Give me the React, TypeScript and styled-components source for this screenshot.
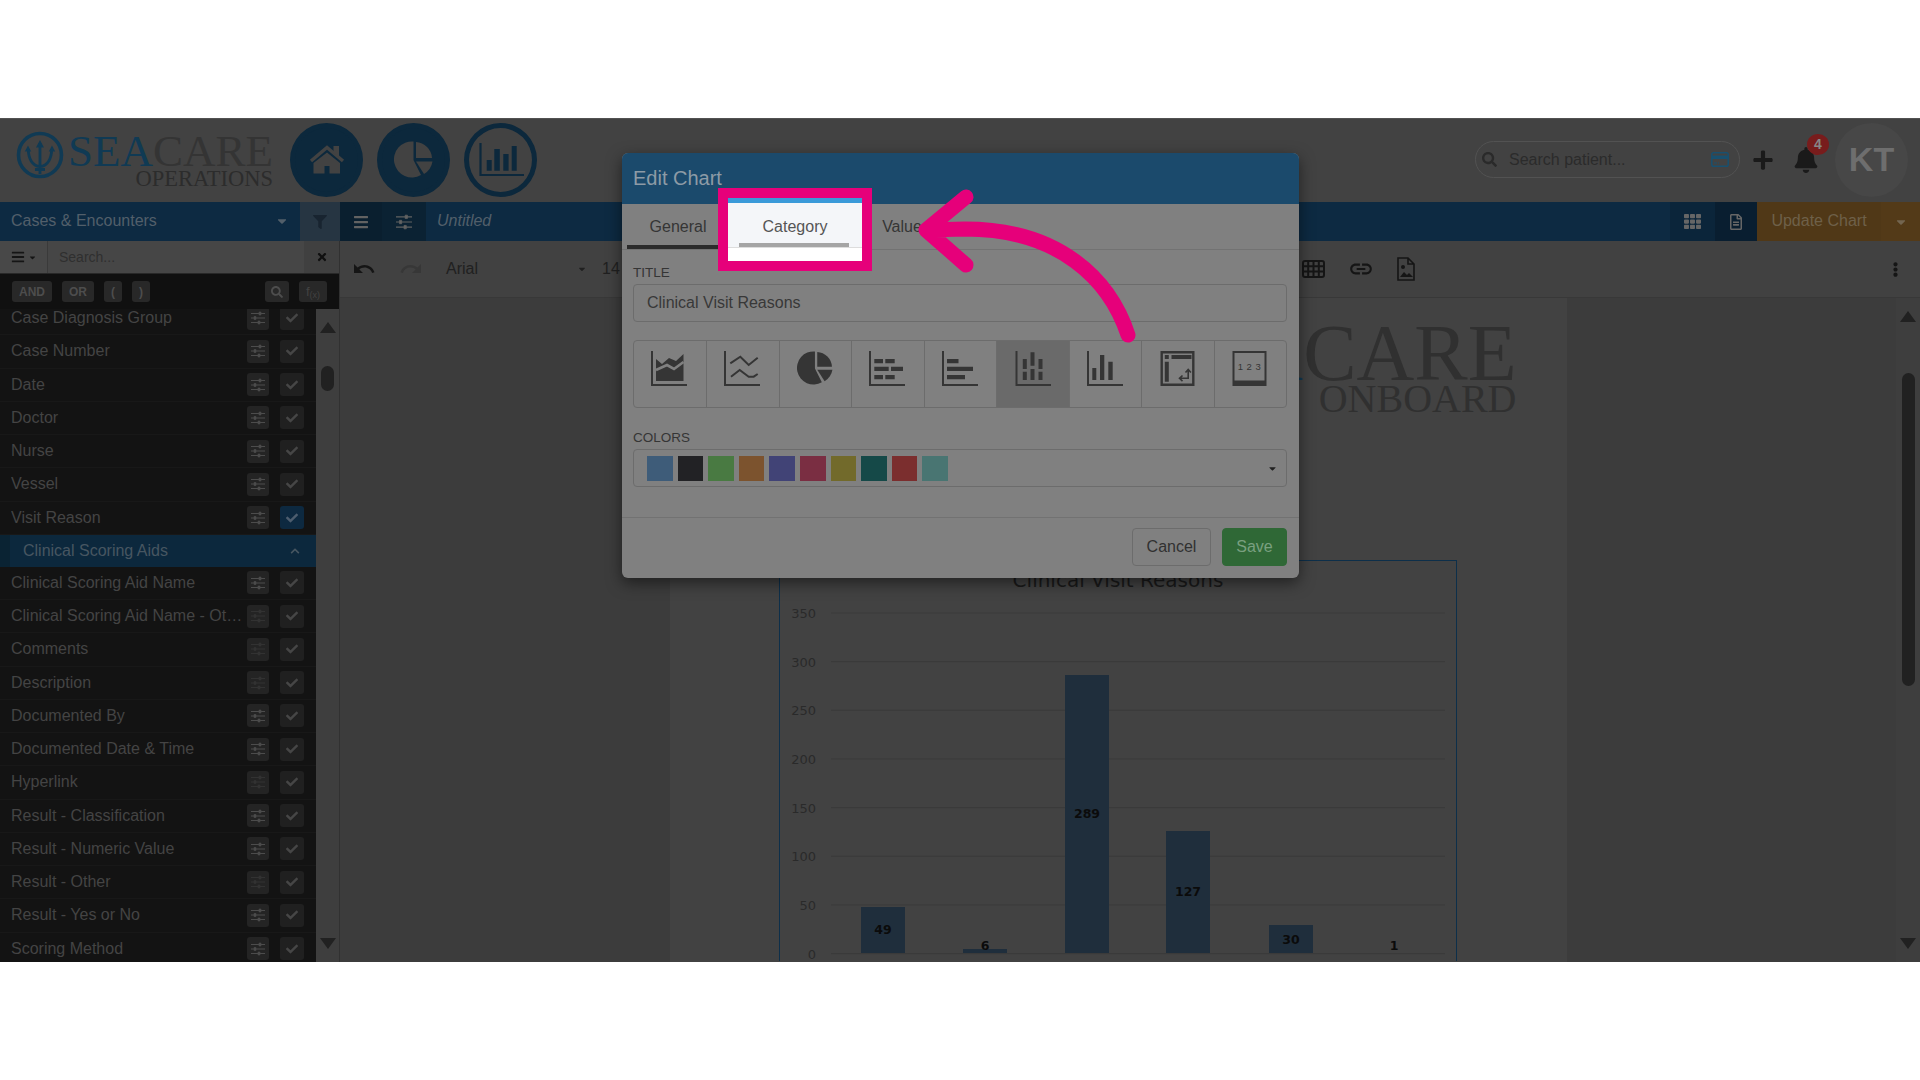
import React from 'react'
import styled, { createGlobalStyle } from 'styled-components'
import {
  FaBars,
  FaBell,
  FaCaretDown,
  FaCheck,
  FaChevronUp,
  FaFilter,
  FaPlus,
  FaRegFileAlt,
  FaSearch,
  FaTh,
  FaTimes,
  FaEllipsisV,
} from 'react-icons/fa'
import { MdLink, MdRedo, MdUndo } from 'react-icons/md'

const GlobalStyle = createGlobalStyle`
  html, body {
    margin: 0;
    padding: 0;
    background: #fff;
    font-family: "Liberation Sans", Arial, sans-serif;
  }
  * {
    box-sizing: border-box;
  }
`

const Page = styled.div`
  width: 1920px;
  height: 1080px;
  padding-top: 118px;
  overflow: hidden;
`

const Screen = styled.div`
  position: relative;
  width: 1920px;
  height: 844px;
  display: flex;
  flex-direction: column;
  overflow: hidden;
  background: #3c3c3c;
`

const Header = styled.header`
  height: 84px;
  display: flex;
  align-items: center;
  padding: 0 12px 2px 16px;
  background: #424242;
  border-top: 1px solid #525252;
`

const Logo = styled.div`
  width: 257px;
  display: flex;
  align-items: flex-start;
  margin-right: 17px;
`

const WordMark = styled.div`
  display: flex;
  flex-direction: column;
  align-items: flex-end;
  margin-left: 4px;
  font-family: "Liberation Serif", "Times New Roman", serif;
`

const LogoTitle = styled.div`
  font-size: 45px;
  line-height: 40px;
  color: #343434;
  white-space: nowrap;
`

const LogoSea = styled.span`
  color: #103a54;
`

const LogoSub = styled.div`
  font-size: 22.5px;
  line-height: 20px;
  color: #2c2c2c;
  margin-top: -2px;
`

const NavCircle = styled.button<{ $outline?: boolean }>`
  width: 73px;
  height: 74px;
  margin-right: 14px;
  padding: 0;
  display: flex;
  align-items: center;
  justify-content: center;
  border-radius: 50%;
  background: ${p => (p.$outline ? 'transparent' : '#0c283c')};
  border: 5px solid #0c283c;
`

const HeaderRight = styled.div`
  margin-left: auto;
  display: flex;
  align-items: center;
`

const PatientSearch = styled.div`
  width: 265px;
  height: 37px;
  display: flex;
  align-items: center;
  padding: 0 10px 0 6px;
  border: 1px solid #525252;
  border-radius: 19px;
  color: #2a2a2a;
`

const PatientText = styled.span`
  flex: 1;
  margin-left: 12px;
  font-size: 16px;
  color: #2b2b2b;
`

const PlusButton = styled.span`
  display: flex;
  margin-left: 12px;
  color: #1a1a1a;
`

const BellWrap = styled.span`
  position: relative;
  display: flex;
  margin-left: 19px;
  margin-right: 16px;
  color: #1a1a1a;
`

const BellBadge = styled.span`
  position: absolute;
  top: -13px;
  left: 14px;
  width: 22px;
  height: 21px;
  border-radius: 50%;
  background: #781c1c;
  color: #868686;
  font-size: 14px;
  font-weight: 700;
  line-height: 20px;
  text-align: center;
`

const Avatar = styled.div`
  width: 73px;
  height: 74px;
  display: flex;
  align-items: center;
  justify-content: center;
  border-radius: 50%;
  background: #474747;
  color: #6e6e6e;
  font-size: 34px;
  font-weight: 700;
`

const TopBar = styled.div`
  height: 39px;
  display: flex;
  align-items: stretch;
  background: #0d2a42;
  color: #525f6a;
`

const DataSource = styled.div`
  width: 300px;
  display: flex;
  align-items: center;
  justify-content: space-between;
  padding: 0 11px 2px;
  font-size: 16px;
`

const BarButton = styled.div<{ $w: number; $bg: string; $fg?: string }>`
  width: ${p => p.$w}px;
  display: flex;
  align-items: center;
  justify-content: center;
  background: ${p => p.$bg};
  color: ${p => p.$fg || '#5c5c5c'};
`

const DocTitle = styled.div`
  flex: 1;
  display: flex;
  align-items: center;
  padding: 0 0 2px 11px;
  font-size: 16px;
  font-style: italic;
`

const UpdateChart = styled.div`
  width: 124px;
  display: flex;
  align-items: center;
  justify-content: center;
  padding-bottom: 2px;
  background: #503817;
  color: #6e6049;
  font-size: 16px;
`

const UpdateCaret = styled.div`
  width: 39px;
  display: flex;
  align-items: center;
  justify-content: center;
  background: #533a18;
  color: #736550;
`

const Body = styled.div`
  flex: 1;
  min-height: 0;
  display: flex;
`

const Sidebar = styled.aside`
  width: 340px;
  display: flex;
  flex-direction: column;
  border-right: 1px solid #313131;
`

const SearchRow = styled.div`
  height: 33px;
  display: flex;
  align-items: stretch;
  background: #464646;
  border-bottom: 1px solid #282828;
`

const FieldMenu = styled.div`
  width: 48px;
  display: flex;
  align-items: center;
  justify-content: center;
  gap: 3px;
  background: #484848;
  border-right: 1px solid #3a3a3a;
  color: #151515;
`

const SearchText = styled.div`
  flex: 1;
  display: flex;
  align-items: center;
  padding-left: 11px;
  font-size: 14px;
  color: #2f2f2f;
`

const ClearButton = styled.div`
  width: 35px;
  display: flex;
  align-items: center;
  justify-content: center;
  background: #404040;
  color: #101010;
`

const OperatorRow = styled.div`
  height: 35px;
  display: flex;
  align-items: center;
  padding: 0 12px 0 11px;
  background: #101010;
`

const OpButton = styled.span<{ $w: number; $ml?: number }>`
  width: ${p => p.$w}px;
  height: 21px;
  margin-left: ${p => p.$ml || 10}px;
  display: flex;
  align-items: center;
  justify-content: center;
  border-radius: 3px;
  background: #282828;
  color: #4d4d4d;
  font-size: 12px;
  font-weight: 700;
`

const FxLabel = styled.span`
  color: #424242;
  font-size: 13px;
  font-weight: 400;

  sub {
    font-size: 9px;
    vertical-align: -2px;
  }
`

const Spacer = styled.span`
  flex: 1;
`

const ListArea = styled.div`
  flex: 1;
  min-height: 0;
  display: flex;
`

const FieldList = styled.div`
  width: 316px;
  overflow: hidden;
  background: #131313;
`

const FieldItems = styled.div`
  margin-top: -7px;
`

const FieldRow = styled.div`
  height: 33.25px;
  display: flex;
  align-items: center;
  padding-left: 11px;
  border-bottom: 1px solid #181818;
`

const FieldLabel = styled.span`
  width: 233px;
  margin-right: 3px;
  font-size: 16px;
  color: #444;
  white-space: nowrap;
  overflow: hidden;
  text-overflow: ellipsis;
`

const SliderButton = styled.span<{ $dim?: boolean }>`
  width: 22px;
  height: 23px;
  display: flex;
  align-items: center;
  justify-content: center;
  border-radius: 3px;
  background: #242424;
  color: ${p => (p.$dim ? '#323232' : '#4c4c4c')};
`

const CheckButton = styled.span<{ $on?: boolean }>`
  width: 24px;
  height: 23px;
  margin-left: 11px;
  display: flex;
  align-items: center;
  justify-content: center;
  border-radius: 3px;
  background: ${p => (p.$on ? '#0d2940' : '#202020')};
  color: ${p => (p.$on ? '#4d5d6e' : '#464646')};
`

const GroupRow = styled.div`
  height: 32px;
  display: flex;
  align-items: center;
  justify-content: space-between;
  padding: 0 16px 0 23px;
  background: linear-gradient(90deg, #0a2333 10px, #0c283d 10px);
  color: #475661;
  font-size: 16px;
`

const ScrollTrack = styled.div<{ $w: number }>`
  position: relative;
  flex: none;
  width: ${p => p.$w}px;
  display: flex;
  flex-direction: column;
  align-items: center;
  background: #3e3e3e;
`

const ScrollUp = styled.span`
  position: absolute;
  top: 13px;
  width: 0;
  height: 0;
  border-left: 8px solid transparent;
  border-right: 8px solid transparent;
  border-bottom: 11px solid #212121;
`

const ScrollDown = styled.span`
  position: absolute;
  bottom: 13px;
  width: 0;
  height: 0;
  border-left: 8px solid transparent;
  border-right: 8px solid transparent;
  border-top: 11px solid #212121;
`

const ScrollThumb = styled.span<{ $top: number; $h: number }>`
  position: absolute;
  top: ${p => p.$top}px;
  width: 13px;
  height: ${p => p.$h}px;
  border-radius: 7px;
  background: #212121;
`

const Main = styled.main`
  flex: 1;
  min-width: 0;
  display: flex;
  flex-direction: column;
`

const EditorBar = styled.div`
  height: 57px;
  display: flex;
  align-items: center;
  padding: 0 17px 0 12px;
  background: #414141;
  border-bottom: 1px solid #383838;
  color: #151515;
`

const UndoIcon = styled.span<{ $off?: boolean }>`
  display: flex;
  margin-right: 23px;
  color: ${p => (p.$off ? '#373737' : '#151515')};
`

const FontSelect = styled.div`
  width: 141px;
  display: flex;
  align-items: center;
  justify-content: space-between;
  margin-right: 15px;
  font-size: 16px;
  color: #202020;
`

const SizeText = styled.span`
  font-size: 16px;
  color: #202020;
`

const EditorRight = styled.div`
  margin-left: auto;
  margin-right: 473px;
  display: flex;
  align-items: center;
  gap: 23px;
`

const Canvas = styled.div`
  flex: 1;
  min-height: 0;
  display: flex;
`

const PaperArea = styled.div`
  flex: 1;
  display: flex;
  justify-content: center;
  background: #3c3c3c;
  overflow: hidden;
`

const Paper = styled.div`
  width: 897px;
  padding-top: 21px;
  display: flex;
  flex-direction: column;
  align-items: center;
  background: #424242;
`

const PaperLogo = styled.div`
  align-self: flex-end;
  margin-right: 50px;
  display: flex;
  flex-direction: column;
  align-items: flex-end;
  font-family: "Liberation Serif", "Times New Roman", serif;
  color: #303030;
`

const PaperLogoTitle = styled.div`
  font-size: 80px;
  line-height: 68px;
  white-space: nowrap;
`

const PaperLogoSub = styled.div`
  font-size: 40px;
  line-height: 34px;
  margin-top: -5px;
  white-space: nowrap;
`

const ChartBox = styled.div`
  width: 678px;
  height: 401px;
  margin-top: 144px;
  flex: none;
  border: 1px solid #0d2f4a;
  border-bottom: none;
`

const Modal = styled.section`
  position: absolute;
  left: 622px;
  top: 35px;
  width: 677px;
  height: 425px;
  display: flex;
  flex-direction: column;
  border-radius: 6px;
  overflow: hidden;
  background: #808080;
  box-shadow: 0 5px 15px rgba(0, 0, 0, 0.5);
`

const ModalHeader = styled.div`
  height: 51px;
  flex: none;
  display: flex;
  align-items: center;
  padding: 0 11px;
  background: #1b4a6c;
  color: #8d9ba6;
  font-size: 20px;
`

const Tabs = styled.div`
  height: 46px;
  flex: none;
  display: flex;
  padding-left: 5px;
  border-bottom: 1px solid #727272;
`

const Tab = styled.div<{ $w: number; $active?: boolean }>`
  width: ${p => p.$w}px;
  height: 45px;
  display: flex;
  align-items: center;
  justify-content: center;
  padding-top: 5px;
  font-size: 16px;
  color: #353535;
  border-bottom: 4px solid ${p => (p.$active ? '#2b2b2b' : 'transparent')};
`

const ModalBody = styled.div`
  flex: 1;
  padding: 15px 12px 0 11px;
`

const FieldName = styled.div`
  height: 15px;
  font-size: 13.5px;
  line-height: 15px;
  color: #353535;
  margin-bottom: 4px;
`

const TitleInput = styled.div`
  height: 38px;
  display: flex;
  align-items: center;
  padding: 0 13px;
  border: 1px solid #6c6c6c;
  border-radius: 4px;
  font-size: 16px;
  color: #383838;
`

const TypeGrid = styled.div`
  height: 68px;
  margin: 18px 0 22px;
  display: grid;
  grid-template-columns: repeat(9, 1fr);
  border: 1px solid #6c6c6c;
  border-radius: 4px;
  overflow: hidden;
`

const TypeCell = styled.div<{ $active?: boolean }>`
  display: flex;
  justify-content: center;
  padding: 10px 2px 0 0;
  border-left: 1px solid #6c6c6c;
  background: ${p => (p.$active ? '#6a6a6a' : 'transparent')};
  color: #353535;
  &:first-child {
    border-left: none;
  }
`

const ColorSelect = styled.div`
  height: 38px;
  display: flex;
  align-items: center;
  gap: 5px;
  padding: 0 8px 0 13px;
  border: 1px solid #6c6c6c;
  border-radius: 4px;
  color: #202020;
`

const Swatch = styled.span<{ $c: string }>`
  width: 25.6px;
  height: 25px;
  background: ${p => p.$c};
`

const ColorCaret = styled.span`
  margin-left: auto;
  display: flex;
`

const ModalFooter = styled.div`
  height: 61px;
  flex: none;
  display: flex;
  align-items: center;
  justify-content: flex-end;
  gap: 11px;
  padding: 0 12px 2px 0;
  border-top: 1px solid #727272;
`

const ModalButton = styled.button<{ $primary?: boolean }>`
  width: ${p => (p.$primary ? 65 : 79)}px;
  height: 38px;
  padding: 0;
  border-radius: 4px;
  border: 1px solid ${p => (p.$primary ? '#2f6836' : '#6c6c6c')};
  background: ${p => (p.$primary ? '#2f6836' : 'transparent')};
  color: ${p => (p.$primary ? '#7aa080' : '#313131')};
  font-family: inherit;
  font-size: 16px;
`

const Spotlight = styled.div`
  position: absolute;
  left: 718px;
  top: 70px;
  width: 154px;
  height: 83px;
  border: 10px solid #e6007a;
  background: #fff;
`

const SpotlightTab = styled.div`
  position: relative;
  height: 50px;
  display: flex;
  align-items: center;
  justify-content: center;
  padding-top: 3px;
  background: #f4f6f9;
  border-top: 5px solid #3a9ad9;
  border-bottom: 1px solid #ddd;
  font-size: 16px;
  color: #555;
`

const SpotlightLine = styled.span`
  position: absolute;
  left: 11px;
  right: 13px;
  bottom: 0;
  height: 4px;
  background: #a5a5a5;
`

const Arrow = styled.svg`
  position: absolute;
  left: 0;
  top: 0;
  pointer-events: none;
`

const fields = [
  { label: 'Case Diagnosis Group' },
  { label: 'Case Number' },
  { label: 'Date' },
  { label: 'Doctor' },
  { label: 'Nurse' },
  { label: 'Vessel' },
  { label: 'Visit Reason', on: true },
]

const scoringFields = [
  { label: 'Clinical Scoring Aid Name' },
  { label: 'Clinical Scoring Aid Name - Other', dim: true },
  { label: 'Comments', dim: true },
  { label: 'Description', dim: true },
  { label: 'Documented By' },
  { label: 'Documented Date & Time' },
  { label: 'Hyperlink', dim: true },
  { label: 'Result - Classification' },
  { label: 'Result - Numeric Value' },
  { label: 'Result - Other', dim: true },
  { label: 'Result - Yes or No' },
  { label: 'Scoring Method' },
]

const swatches = [
  '#3e5c79',
  '#222225',
  '#497a42',
  '#7c532e',
  '#414376',
  '#7a2e42',
  '#726a2b',
  '#154948',
  '#7b2e2e',
  '#497572',
]

const bars = [
  { x: 81, value: 49, top: 346, labelY: 368 },
  { x: 183, value: 6, top: 388, labelY: 384 },
  { x: 285, value: 289, top: 114, labelY: 252 },
  { x: 386, value: 127, top: 270, labelY: 330 },
  { x: 489, value: 30, top: 364, labelY: 378 },
  { x: 592, value: 1, top: 392, labelY: 384 },
]

const ticks = [350, 300, 250, 200, 150, 100, 50, 0]

const Axes = () => <path d="M2 0v34h35" fill="none" stroke="currentColor" strokeWidth="2" />

const PieShape = () => (
  <>
    <path d="M19.5 0.5A18 18 0 1 0 27 34L19.5 19z" />
    <path d="M22 1A17 17 0 0 1 38 17H22z" />
    <path d="M22 20.5H38.5A18 18 0 0 1 30 33z" />
  </>
)

const chartIcons = [
  <>
    <Axes />
    <path d="M6 8l6 5 7-6 7 3 7.5-7v27H6z" fill="currentColor" />
    <path d="M6 19l11-5 7 4 9.5-7" fill="none" stroke="#808080" strokeWidth="2.6" />
  </>,
  <>
    <Axes />
    <path d="M7.3 12.3l10-6.6 8.4 8.3 9-7.3M8 25.7L16.7 19l9 6.7h5l4-2.7" fill="none" stroke="currentColor" strokeWidth="2" />
  </>,
  <g fill="currentColor" transform="translate(1 0) scale(0.92)">
    <PieShape />
  </g>,
  <>
    <Axes />
    <path d="M6.3 8H15v4.3H6.3zM17.3 8h9.4v4.3h-9.4zM6.3 15.7h14.4V20H6.3zM23 15.7h12V20H23zM6.3 24H15v4.3H6.3zM17.3 24h9.4v4.3h-9.4z" fill="currentColor" />
  </>,
  <g transform="translate(1 0)">
    <Axes />
    <path d="M6 8h11.5v4.3H6zM6 15.7h26V20H6zM6 24h18v4.3H6z" fill="currentColor" />
  </g>,
  <g transform="translate(1.5 0)">
    <Axes />
    <path d="M8.3 8h4v10h-4zM8.3 20.7h4V29h-4zM16 1.3h4v13.4h-4zM16 18h4v11h-4zM24 8h4v10h-4zM24 20.7h4V29h-4z" fill="currentColor" />
  </g>,
  <g transform="translate(1 0)">
    <Axes />
    <path d="M6.3 17h4v12h-4zM14 4h4.3v25H14zM22.3 10.7h4.4V29h-4.4z" fill="currentColor" />
  </g>,
  <g transform="translate(2.5 0)">
    <path d="M1.2 1.2h31.6v32.6H1.2z" fill="none" stroke="currentColor" strokeWidth="2.4" />
    <path d="M4.3 4h4v4h-4zM11 4h20v4H11zM4.3 10.7h4v20h-4z" fill="currentColor" />
    <path d="M19.3 27.3h8.4V19M22 24.5l-3 2.8 3 2.8M25 21.5l2.7-3 2.7 3" fill="none" stroke="currentColor" strokeWidth="1.6" />
  </g>,
  <g transform="translate(2.5 0)">
    <path d="M1 1h32v33H1z" fill="none" stroke="currentColor" strokeWidth="2" />
    <path d="M1 29.5h32V34H1z" fill="currentColor" />
    <text x="18.5" y="19" fontSize="9.5" textAnchor="middle" letterSpacing="3.5" fill="currentColor" fontFamily="Liberation Sans">
      123
    </text>
  </g>,
]

const TridentLogo = () => (
  <svg width="48" height="48" viewBox="0 0 48 48" fill="none" stroke="#103a54">
    <circle cx="24" cy="24" r="21.5" strokeWidth="3.6" />
    <path d="M24 12v31M19 38.5h10M12.3 18c0 9 3.7 17 11.7 17.5M35.7 18c0 9-3.7 17-11.7 17.5" strokeWidth="2.8" />
    <path d="M24 9l-4 7.5h8zM12 14.5l-3.2 6h6.4zM36 14.5l-3.2 6h6.4z" fill="#103a54" strokeWidth="0" />
  </svg>
)

const HomeNav = () => (
  <svg width="36" height="29" viewBox="0 0 36 29" fill="#424242">
    <path d="M2 16L18 2.5 34 16" fill="none" stroke="#424242" strokeWidth="3.4" />
    <path d="M24.5 1H30v11.5l-5.5-4.5z" />
    <path d="M18 7.5L31 18v10.5H20.5V21h-5v7.5H4.5V18z" />
  </svg>
)

const PieNav = () => (
  <svg width="40" height="38" viewBox="0 0 40 38" fill="#424242">
    <PieShape />
  </svg>
)

const BarsNav = () => (
  <svg width="46" height="36" viewBox="0 0 46 36" fill="#0c283c">
    <path d="M2.5 1v32H46" fill="none" stroke="#0c283c" strokeWidth="2.2" />
    <path d="M8.7 18h5v10.7h-5zM16.3 7h5.5v21.7h-5.500zM25.3 12h5.300v16.700h-5.300zM33.700 4h5v24.700h-5z" />
  </svg>
)

const SlidersGlyph = ({ size = 14 }: { size?: number }) => (
  <svg width={size} height={size} viewBox="0 0 14 14" fill="none" stroke="currentColor">
    <path d="M0 2.5h14M0 7h14M0 11.5h14" strokeWidth="1" />
    <path d="M8 1h2v3H8zM3 5.5h2v3H3zM7 10h2v3H7z" fill="currentColor" strokeWidth="0.6" />
  </svg>
)

const CardGlyph = () => (
  <svg width="18" height="15" viewBox="0 0 18 15" fill="#18506f" stroke="#18506f">
    <rect x="0.8" y="0.8" width="16.4" height="13.4" rx="1.8" fill="none" strokeWidth="1.5" />
    <path d="M1 3.5h16V7H1z" strokeWidth="0" />
    <path d="M3 11h3M7 11h1" strokeWidth="1" />
  </svg>
)

const TableGlyph = () => (
  <svg width="23" height="18" viewBox="0 0 23 18" fill="none" stroke="currentColor" strokeWidth="2">
    <rect x="1" y="1" width="21" height="16" rx="2" />
    <path d="M1 6.3h21M1 11.6h21M6.2 1v16M11.5 1v16M16.8 1v16" />
  </svg>
)

const ImageFileGlyph = () => (
  <svg width="18" height="24" viewBox="0 0 18 24" fill="none" stroke="currentColor" strokeWidth="1.6">
    <path d="M1 1h10l6 6v16H1zM11 1v6h6" />
    <circle cx="6" cy="10" r="2" fill="currentColor" stroke="none" />
    <path d="M3 20l4-5 3 3 2-2 4 4z" fill="currentColor" stroke="none" />
  </svg>
)

const App = () => {
  return (
    <Page>
      <GlobalStyle />
      <Screen>
        <Header>
          <Logo>
            <TridentLogo />
            <WordMark>
              <LogoTitle>
                <LogoSea>SEA</LogoSea>CARE
              </LogoTitle>
              <LogoSub>OPERATIONS</LogoSub>
            </WordMark>
          </Logo>
          <NavCircle>
            <HomeNav />
          </NavCircle>
          <NavCircle>
            <PieNav />
          </NavCircle>
          <NavCircle $outline>
            <BarsNav />
          </NavCircle>
          <HeaderRight>
            <PatientSearch>
              <FaSearch size={15} />
              <PatientText>Search patient...</PatientText>
              <CardGlyph />
            </PatientSearch>
            <PlusButton>
              <FaPlus size={22} />
            </PlusButton>
            <BellWrap>
              <FaBell size={26} />
              <BellBadge>4</BellBadge>
            </BellWrap>
            <Avatar>KT</Avatar>
          </HeaderRight>
        </Header>

        <TopBar>
          <DataSource>
            Cases &amp; Encounters
            <FaCaretDown size={14} />
          </DataSource>
          <BarButton $w={40} $bg="#263542" $fg="#182430">
            <FaFilter size={14} />
          </BarButton>
          <BarButton $w={42} $bg="#0a1f2f" $fg="#626262">
            <FaBars size={16} />
          </BarButton>
          <BarButton $w={44} $bg="#0b2233" $fg="#626262">
            <SlidersGlyph size={16} />
          </BarButton>
          <DocTitle>Untitled</DocTitle>
          <BarButton $w={45} $bg="#0b253a" $fg="#666">
            <FaTh size={17} />
          </BarButton>
          <BarButton $w={42} $bg="#091e30" $fg="#666">
            <FaRegFileAlt size={16} />
          </BarButton>
          <UpdateChart>Update Chart</UpdateChart>
          <UpdateCaret>
            <FaCaretDown size={14} />
          </UpdateCaret>
        </TopBar>

        <Body>
          <Sidebar>
            <SearchRow>
              <FieldMenu>
                <FaBars size={14} />
                <FaCaretDown size={9} />
              </FieldMenu>
              <SearchText>Search...</SearchText>
              <ClearButton>
                <FaTimes size={12} />
              </ClearButton>
            </SearchRow>
            <OperatorRow>
              <OpButton $w={40} $ml={1}>AND</OpButton>
              <OpButton $w={32}>OR</OpButton>
              <OpButton $w={18}>(</OpButton>
              <OpButton $w={18}>)</OpButton>
              <Spacer />
              <OpButton $w={24}>
                <FaSearch size={12} />
              </OpButton>
              <OpButton $w={28}>
                <FxLabel>
                  f<sub>(x)</sub>
                </FxLabel>
              </OpButton>
            </OperatorRow>
            <ListArea>
              <FieldList>
                <FieldItems>
                  {fields.map(f => (
                    <FieldRow key={f.label}>
                      <FieldLabel>{f.label}</FieldLabel>
                      <SliderButton>
                        <SlidersGlyph />
                      </SliderButton>
                      <CheckButton $on={f.on}>
                        <FaCheck size={12} />
                      </CheckButton>
                    </FieldRow>
                  ))}
                  <GroupRow>
                    Clinical Scoring Aids
                    <FaChevronUp size={10} />
                  </GroupRow>
                  {scoringFields.map(f => (
                    <FieldRow key={f.label}>
                      <FieldLabel>{f.label}</FieldLabel>
                      <SliderButton $dim={f.dim}>
                        <SlidersGlyph />
                      </SliderButton>
                      <CheckButton>
                        <FaCheck size={12} />
                      </CheckButton>
                    </FieldRow>
                  ))}
                </FieldItems>
              </FieldList>
              <ScrollTrack $w={23}>
                <ScrollUp />
                <ScrollThumb $top={57} $h={25} />
                <ScrollDown />
              </ScrollTrack>
            </ListArea>
          </Sidebar>

          <Main>
            <EditorBar>
              <UndoIcon>
                <MdUndo size={24} />
              </UndoIcon>
              <UndoIcon $off>
                <MdRedo size={24} />
              </UndoIcon>
              <FontSelect>
                Arial
                <FaCaretDown size={10} />
              </FontSelect>
              <SizeText>14</SizeText>
              <EditorRight>
                <TableGlyph />
                <MdLink size={26} />
                <ImageFileGlyph />
              </EditorRight>
              <FaEllipsisV size={15} />
            </EditorBar>
            <Canvas>
              <PaperArea>
                <Paper>
                  <PaperLogo>
                    <PaperLogoTitle>
                      <LogoSea>SEA</LogoSea>CARE
                    </PaperLogoTitle>
                    <PaperLogoSub>ONBOARD</PaperLogoSub>
                  </PaperLogo>
                  <ChartBox>
                    <svg width="676" height="401" viewBox="0 0 676 401">
                      <text x="338" y="26" fontSize="20" textAnchor="middle" fill="#1a1a1a" fontFamily="DejaVu Sans">
                        Clinical Visit Reasons
                      </text>
                      {ticks.map((t, i) => {
                        const y = 52 + i * 48.65
                        return (
                          <g key={t}>
                            <line x1="51" x2="665" y1={y} y2={y} stroke="#3a3a3a" />
                            <text x="36" y={y + 5} fontSize="13" textAnchor="end" fill="#2a2a2a" fontFamily="DejaVu Sans">
                              {t}
                            </text>
                          </g>
                        )
                      })}
                      {bars.map(b => (
                        <g key={b.x}>
                          {b.value > 1 && <rect x={b.x} y={b.top} width="44" height={392 - b.top} fill="#1f2e3c" />}
                          <text
                            x={b.x + 22}
                            y={b.labelY + 5}
                            fontSize="12.5"
                            fontWeight="700"
                            textAnchor="middle"
                            fill="#0b0b0b"
                            fontFamily="DejaVu Sans"
                          >
                            {b.value}
                          </text>
                        </g>
                      ))}
                    </svg>
                  </ChartBox>
                </Paper>
              </PaperArea>
              <ScrollTrack $w={24}>
                <ScrollUp />
                <ScrollThumb $top={75} $h={313} />
                <ScrollDown />
              </ScrollTrack>
            </Canvas>
          </Main>
        </Body>

        <Modal>
          <ModalHeader>Edit Chart</ModalHeader>
          <Tabs>
            <Tab $w={102} $active>General</Tab>
            <Tab $w={143}>Category</Tab>
            <Tab $w={68}>Values</Tab>
          </Tabs>
          <ModalBody>
            <FieldName>TITLE</FieldName>
            <TitleInput>Clinical Visit Reasons</TitleInput>
            <TypeGrid>
              {chartIcons.map((icon, i) => (
                <TypeCell key={i} $active={i === 5}>
                  <svg width="38" height="36" viewBox="0 0 38 36">
                    {icon}
                  </svg>
                </TypeCell>
              ))}
            </TypeGrid>
            <FieldName>COLORS</FieldName>
            <ColorSelect>
              {swatches.map(c => (
                <Swatch key={c} $c={c} />
              ))}
              <ColorCaret>
                <FaCaretDown size={11} />
              </ColorCaret>
            </ColorSelect>
          </ModalBody>
          <ModalFooter>
            <ModalButton>Cancel</ModalButton>
            <ModalButton $primary>Save</ModalButton>
          </ModalFooter>
        </Modal>

        <Spotlight>
          <SpotlightTab>
            Category
            <SpotlightLine />
          </SpotlightTab>
        </Spotlight>

        <Arrow width="1920" height="844" viewBox="0 118 1920 844" fill="none" stroke="#e6007a" strokeWidth="15" strokeLinecap="round" strokeLinejoin="round">
          <path d="M966 197L926 230L966 265M1128 335C1110 280 1060 229 965 229L926 230" />
        </Arrow>
      </Screen>
    </Page>
  )
}

export default App
